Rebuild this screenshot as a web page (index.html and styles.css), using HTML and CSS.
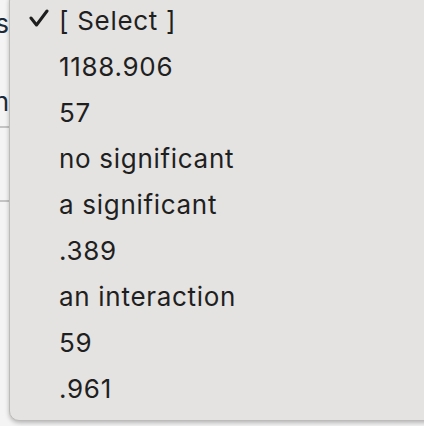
FILE: index.html
```html
<!DOCTYPE html>
<html>
<head>
<meta charset="utf-8">
<link rel="stylesheet" href="styles.css">
</head>
<body>
<div class="page">
  <div class="bg-clip">
    <div class="bg-row bg-row-first">Meas</div>
    <div class="bg-row bg-row-second">Mean</div>
  </div>
  <div class="bg-rule bg-rule-a"></div>
  <div class="bg-rule bg-rule-b"></div>
</div>
<div class="menu">
  <div class="item selected">
    <svg class="check" width="22" height="20" viewBox="0 0 22 20"><polyline points="2,9 7.5,16 18,2" fill="none" stroke="#1e1e1e" stroke-width="3" stroke-linecap="round" stroke-linejoin="round"/></svg>
    <span>[ Select ]</span>
  </div>
  <div class="item"><span>1188.906</span></div>
  <div class="item"><span>57</span></div>
  <div class="item"><span>no significant</span></div>
  <div class="item"><span>a significant</span></div>
  <div class="item"><span>.389</span></div>
  <div class="item"><span>an interaction</span></div>
  <div class="item"><span>59</span></div>
  <div class="item"><span>.961</span></div>
</div>
</body>
</html>
```

FILE: styles.css
```css
html, body {
  margin: 0;
  padding: 0;
  width: 424px;
  height: 426px;
  overflow: hidden;
  background: #f3f3f3;
  font-family: Inter, "Liberation Sans", sans-serif;
}
.page {
  position: relative;
  width: 424px;
  height: 426px;
  background: #f4f4f4;
}
.bg-clip {
  position: absolute;
  left: 0;
  top: 0;
  width: 12px;
  height: 130px;
  overflow: hidden;
}
.bg-row {
  position: absolute;
  right: 3px;
  font-size: 26px;
  color: #1c2b3a;
  white-space: nowrap;
}
.bg-row-first { top: 8px; }
.bg-row-second { top: 86px; }
.bg-rule {
  position: absolute;
  left: 0;
  width: 20px;
  height: 2px;
  background: #c4c4c4;
}
.bg-rule-a { top: 126px; }
.bg-rule-b { top: 200px; }
.menu {
  position: absolute;
  left: 9px;
  top: -9px;
  width: 440px;
  height: 430px;
  box-sizing: border-box;
  padding-top: 5px;
  background: #e4e3e1;
  border: 1px solid #bdbcba;
  border-radius: 10px;
  box-shadow: 0 2px 4px rgba(0,0,0,0.25);
}
.item {
  position: relative;
  height: 46px;
  display: flex;
  align-items: center;
  padding-left: 49px;
  font-size: 26px;
  color: #1f1f1f;
  letter-spacing: 0.7px;
}
.check {
  position: absolute;
  left: 19px;
  top: 12px;
}
```
